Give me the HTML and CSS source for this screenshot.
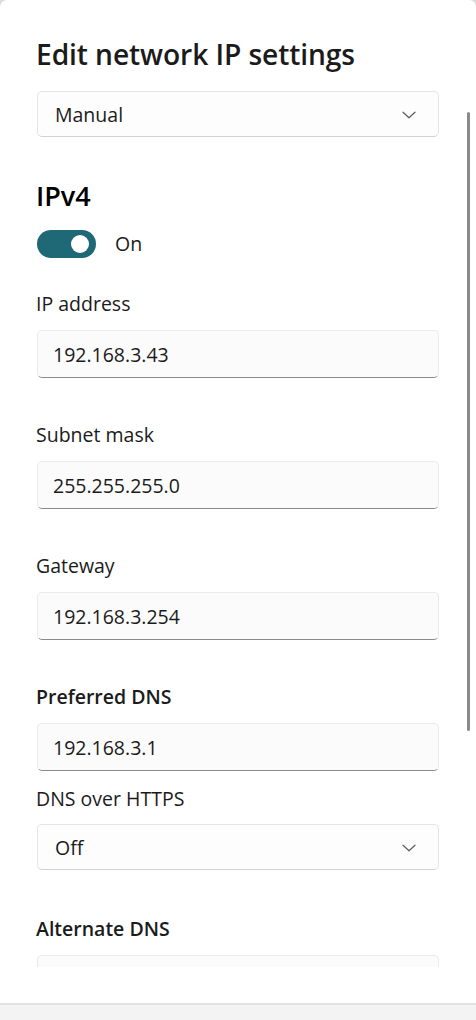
FILE: index.html
```html
<!DOCTYPE html>
<html lang="en">
<head>
<meta charset="utf-8">
<title>Edit network IP settings</title>
<link rel="stylesheet" href="styles.css">
</head>
<body>
<div class="window">
  <div class="scroll">
    <div class="content">
      <h1 class="title">Edit network IP settings</h1>
      <div class="select select-mode">
        <span>Manual</span>
        <svg class="chev" width="14" height="8" viewBox="0 0 14 8"><path d="M1 1.2 L7 6.8 L13 1.2" fill="none" stroke="#5c5c5c" stroke-width="1.2" stroke-linecap="round" stroke-linejoin="round"/></svg>
      </div>
      <h2 class="section">IPv4</h2>
      <div class="toggle-row">
        <div class="toggle"><div class="knob"></div></div>
        <span class="toggle-text">On</span>
      </div>

      <label class="label first">IP address</label>
      <div class="input"><span>192.168.3.43</span></div>

      <label class="label">Subnet mask</label>
      <div class="input"><span>255.255.255.0</span></div>

      <label class="label">Gateway</label>
      <div class="input"><span>192.168.3.254</span></div>

      <label class="label strong">Preferred DNS</label>
      <div class="input"><span>192.168.3.1</span></div>

      <label class="label tight">DNS over HTTPS</label>
      <div class="select select-doh">
        <span>Off</span>
        <svg class="chev" width="14" height="8" viewBox="0 0 14 8"><path d="M1 1.2 L7 6.8 L13 1.2" fill="none" stroke="#5c5c5c" stroke-width="1.2" stroke-linecap="round" stroke-linejoin="round"/></svg>
      </div>

      <label class="label strong alt">Alternate DNS</label>
      <div class="input"><span></span></div>
    </div>
    <div class="scrollbar"></div>
  </div>
  <div class="gap"></div>
  <div class="footer"></div>
</div>
</body>
</html>
```

FILE: styles.css
```css
* { box-sizing: border-box; }
html, body { margin: 0; padding: 0; }
body {
  background: #dcdcdc;
  font-family: "Open Sans", "Noto Sans", sans-serif;
  color: #1b1b1b;
  width: 476px;
  height: 1020px;
  overflow: hidden;
}
.window {
  background: #ffffff;
  width: 476px;
  height: 1020px;
  border-radius: 7px 7px 0 0;
  display: flex;
  flex-direction: column;
  overflow: hidden;
}
.scroll {
  position: relative;
  height: 967px;
  overflow: hidden;
  flex: none;
}
.content {
  padding: 36px 0 0 36px;
  width: 439px;
  display: flex;
  flex-direction: column;
}
.title {
  margin: 0;
  font-size: 28.2px;
  font-weight: 600;
  line-height: 36px;
  letter-spacing: -0.1px;
  color: #1b1b1b;
}
.select {
  margin-top: 19px;
  margin-left: 1px;
  height: 46px;
  width: 402px;
  border: 1px solid #e5e5e5;
  border-bottom-color: #d2d2d2;
  border-radius: 5px;
  background: #fdfdfd;
  display: flex;
  align-items: center;
  justify-content: space-between;
  padding: 0 22px 0 17px;
  font-size: 19.5px;
  color: #1b1b1b;
}
.select .chev { margin-top: 1px; }
.select-doh { margin-top: 12px; }
.section {
  margin: 41px 0 0 0;
  font-size: 27px;
  font-weight: 600;
  line-height: 36px;
  color: #000;
}
.toggle-row {
  margin-top: 16px;
  margin-left: 1px;
  display: flex;
  align-items: center;
  gap: 19px;
  height: 28px;
}
.toggle {
  width: 59px;
  height: 28px;
  border-radius: 14px;
  background: #1f6875;
  position: relative;
  flex: none;
}
.knob {
  position: absolute;
  width: 18px;
  height: 18px;
  border-radius: 50%;
  background: #fff;
  top: 5px;
  right: 7px;
}
.toggle-text {
  font-size: 19.5px;
  line-height: 28px;
  color: #1b1b1b;
}
.label {
  display: block;
  margin-top: 44px;
  font-size: 19.5px;
  line-height: 26px;
  color: #1b1b1b;
}
.label.first { margin-top: 33px; }
.label.strong { font-weight: 600; }
.label.tight { margin-top: 15px; }
.label.alt { margin-top: 46px; }
.input {
  margin-top: 13px;
  margin-left: 1px;
  height: 48px;
  width: 402px;
  border: 1px solid #ebebeb;
  border-bottom: 1.5px solid #8a8a8a;
  border-radius: 5px;
  background: #fbfbfb;
  display: flex;
  align-items: center;
  padding: 0 15px;
  font-size: 19.5px;
  color: #1b1b1b;
}
.scrollbar {
  position: absolute;
  left: 467px;
  top: 112px;
  width: 3px;
  height: 619px;
  border-radius: 2px;
  background: #8a8a8a;
}
.gap {
  height: 36px;
  flex: none;
  background: #fff;
}
.footer {
  flex: 1;
  border-top: 2px solid #e2e2e2;
  background: #f3f3f3;
}
```
